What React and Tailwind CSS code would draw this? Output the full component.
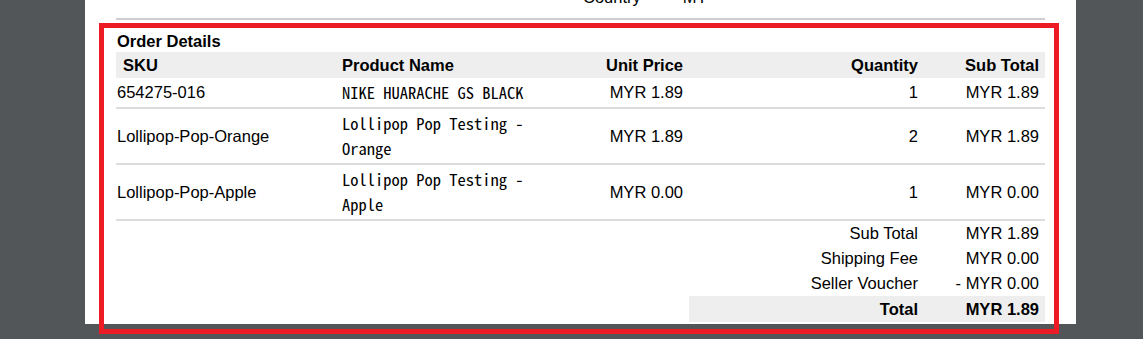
import React from "react";

const sans = { fontFamily: '"Liberation Sans", Arial, sans-serif' };
const mono = { fontFamily: '"Noto Sans Mono CJK SC", "Liberation Mono", monospace' };

const items = [
  { sku: "654275-016", name: "NIKE HUARACHE GS BLACK", price: "MYR 1.89", qty: "1", sub: "MYR 1.89" },
  { sku: "Lollipop-Pop-Orange", name: "Lollipop Pop Testing - Orange", price: "MYR 1.89", qty: "2", sub: "MYR 1.89" },
  { sku: "Lollipop-Pop-Apple", name: "Lollipop Pop Testing - Apple", price: "MYR 0.00", qty: "1", sub: "MYR 0.00" },
];

const cols = "grid grid-cols-[220px_220px_133px_235px_121px]";

export default function App() {
  return (
    <div className="h-[339px] w-[1143px] overflow-hidden bg-[#525659] pl-[85px]" style={sans}>
      <div className="h-full w-[991px] bg-white px-[31px] text-[16.5px] text-black">
        <div className="-mt-[15px] flex h-[25px] leading-[25px]">
          <span className="ml-[467px]">Country</span>
          <span className="ml-[42px]">MY</span>
        </div>
        <div className="mt-[8px] h-[2px] bg-[#cfcfcf]" />
        <div className="-ml-[17px] -mr-[14px] mt-[3px] h-[311px] border-[5px] border-[#ed1c24] pl-[12px] pr-[9px]">
          <div className="pl-[1px] pt-[3px] font-bold leading-[21px]">Order Details</div>
          <div className={`${cols} h-[26px] items-center bg-[#eeeeee] font-bold leading-[26px]`}>
            <div className="pl-[7px]">SKU</div>
            <div className="pl-[6px]">Product Name</div>
            <div className="pr-[6px] text-right">Unit Price</div>
            <div className="pr-[6px] text-right">Quantity</div>
            <div className="pr-[6px] text-right">Sub Total</div>
          </div>
          {items.map((it) => (
            <div key={it.sku} className={`${cols} items-center border-b-2 border-[#dddddd] py-[2px] leading-[25px]`}>
              <div className="pl-[1px]">{it.sku}</div>
              <div className="pl-[6px]" style={mono}>{it.name}</div>
              <div className="pr-[6px] text-right">{it.price}</div>
              <div className="pr-[6px] text-right">{it.qty}</div>
              <div className="pr-[6px] text-right">{it.sub}</div>
            </div>
          ))}
          {[
            ["Sub Total", "MYR 1.89"],
            ["Shipping Fee", "MYR 0.00"],
            ["Seller Voucher", "- MYR 0.00"],
          ].map(([l, v]) => (
            <div key={l} className={`${cols} h-[25px] leading-[25px]`}>
              <div className="col-start-4 pr-[6px] text-right">{l}</div>
              <div className="pr-[6px] text-right">{v}</div>
            </div>
          ))}
          <div className={`${cols} h-[26px] font-bold leading-[26px]`}>
            <div className="col-start-4 bg-[#eeeeee] pr-[6px] text-right">Total</div>
            <div className="bg-[#eeeeee] pr-[6px] text-right">MYR 1.89</div>
          </div>
        </div>
      </div>
    </div>
  );
}
